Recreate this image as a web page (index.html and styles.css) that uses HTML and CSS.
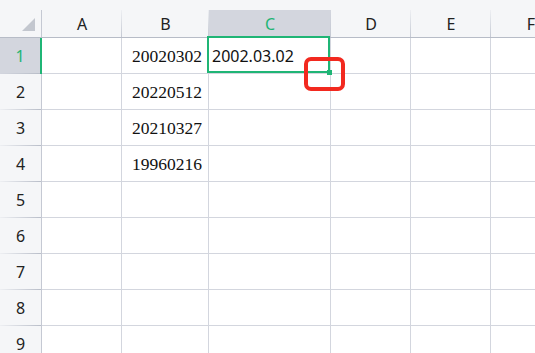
FILE: index.html
```html
<!DOCTYPE html>
<html lang="zh">
<head>
  <meta charset="UTF-8">
  <title>Sheet</title>
  <link rel="stylesheet" href="styles.css">
</head>
<body>

  <div class="topStrip"></div>

  <div class="sheet">
    <!-- column headers -->
    <div class="colHead corner">
      <svg width="14" height="14" viewBox="0 0 14 14"><polygon points="13,0 13,13 0,13" fill="#c3c7cf"/></svg>
    </div>
    <div class="colHead">A</div>
    <div class="colHead">B</div>
    <div class="colHead active">C</div>
    <div class="colHead">D</div>
    <div class="colHead">E</div>
    <div class="colHead">F</div>

    <!-- row 1 -->
    <div class="rowHead active">1</div>
    <div class="cell"></div>
    <div class="cell num">20020302</div>
    <div class="cell text selected">2002.03.02</div>
    <div class="cell"></div>
    <div class="cell"></div>
    <div class="cell"></div>

    <div class="rowHead">2</div>
    <div class="cell"></div>
    <div class="cell num">20220512</div>
    <div class="cell"></div>
    <div class="cell"></div>
    <div class="cell"></div>
    <div class="cell"></div>

    <div class="rowHead">3</div>
    <div class="cell"></div>
    <div class="cell num">20210327</div>
    <div class="cell"></div>
    <div class="cell"></div>
    <div class="cell"></div>
    <div class="cell"></div>

    <div class="rowHead">4</div>
    <div class="cell"></div>
    <div class="cell num">19960216</div>
    <div class="cell"></div>
    <div class="cell"></div>
    <div class="cell"></div>
    <div class="cell"></div>

    <div class="rowHead">5</div>
    <div class="cell"></div>
    <div class="cell"></div>
    <div class="cell"></div>
    <div class="cell"></div>
    <div class="cell"></div>
    <div class="cell"></div>

    <div class="rowHead">6</div>
    <div class="cell"></div>
    <div class="cell"></div>
    <div class="cell"></div>
    <div class="cell"></div>
    <div class="cell"></div>
    <div class="cell"></div>

    <div class="rowHead">7</div>
    <div class="cell"></div>
    <div class="cell"></div>
    <div class="cell"></div>
    <div class="cell"></div>
    <div class="cell"></div>
    <div class="cell"></div>

    <div class="rowHead">8</div>
    <div class="cell"></div>
    <div class="cell"></div>
    <div class="cell"></div>
    <div class="cell"></div>
    <div class="cell"></div>
    <div class="cell"></div>

    <div class="rowHead">9</div>
    <div class="cell"></div>
    <div class="cell"></div>
    <div class="cell"></div>
    <div class="cell"></div>
    <div class="cell"></div>
    <div class="cell"></div>

    <!-- red annotation box over the fill handle -->
    <div class="mark"></div>
  </div>

</body>
</html>
```

FILE: styles.css
```css
* {
  box-sizing: border-box;
}

body {
  margin: 0;
  background: #fff;
  overflow: hidden;
  font-family: 'Noto Sans', 'Noto Sans CJK SC', sans-serif;
  color: #222;
}

.topStrip {
  height: 10px;
  background: #f5f6f8;
}

.sheet {
  position: relative;
  display: grid;
  grid-template-columns: 42px 80px 87px 122px 80px 80px 80px;
  grid-template-rows: 28px repeat(9, 36px);
  width: 535px;
  overflow: hidden;
}

.colHead {
  display: flex;
  align-items: center;
  justify-content: center;
  font-size: 16px;
  color: #222;
  background-color: #f5f6f8;
  background-image: linear-gradient(to bottom, rgba(208, 212, 222, 0.2), #c5c9d3);
  background-size: 1px 100%;
  background-position: right top;
  background-repeat: no-repeat;
  border-bottom: 1px solid #b7bcc7;
}

.colHead.corner {
  justify-content: flex-end;
  align-items: flex-end;
  padding: 0 6px 5px 0;
  background-image: linear-gradient(#c5c9d3, #c5c9d3);
}

.colHead.active {
  background-color: #d3d6de;
  color: #1fb575;
}

.rowHead {
  display: flex;
  align-items: center;
  justify-content: center;
  font-size: 16px;
  color: #222;
  background-color: #f5f6f8;
  background-image: linear-gradient(to right, rgba(208, 212, 222, 0.2), #b9bec9);
  background-size: 100% 1px;
  background-position: left bottom;
  background-repeat: no-repeat;
  border-right: 1px solid #c5c9d3;
}

.rowHead.active {
  background-color: #d3d6de;
  color: #1fb575;
  border-right: 2px solid #1fb575;
}

.cell {
  border-right: 1px solid #d3d6de;
  border-bottom: 1px solid #d3d6de;
  display: flex;
  align-items: center;
  white-space: nowrap;
}

.cell.num {
  justify-content: flex-end;
  padding: 2px 6px 0 0;
  font-family: 'Liberation Serif', serif;
  font-size: 17.5px;
  color: #111;
}

.cell.text {
  padding-left: 3px;
  font-size: 16px;
  color: #111;
}

.cell.selected {
  position: relative;
}

.cell.selected::after {
  content: "";
  position: absolute;
  top: -2px;
  left: -2px;
  right: 0;
  bottom: 0;
  border: 2px solid #1fb575;
}

.cell.selected::before {
  content: "";
  position: absolute;
  right: -2px;
  bottom: -2px;
  width: 5px;
  height: 5px;
  background: #1fb575;
  z-index: 2;
}

.mark {
  position: absolute;
  left: 304px;
  top: 47px;
  width: 41px;
  height: 34px;
  border: 4px solid #f2291f;
  border-radius: 7px;
  z-index: 3;
}
```
